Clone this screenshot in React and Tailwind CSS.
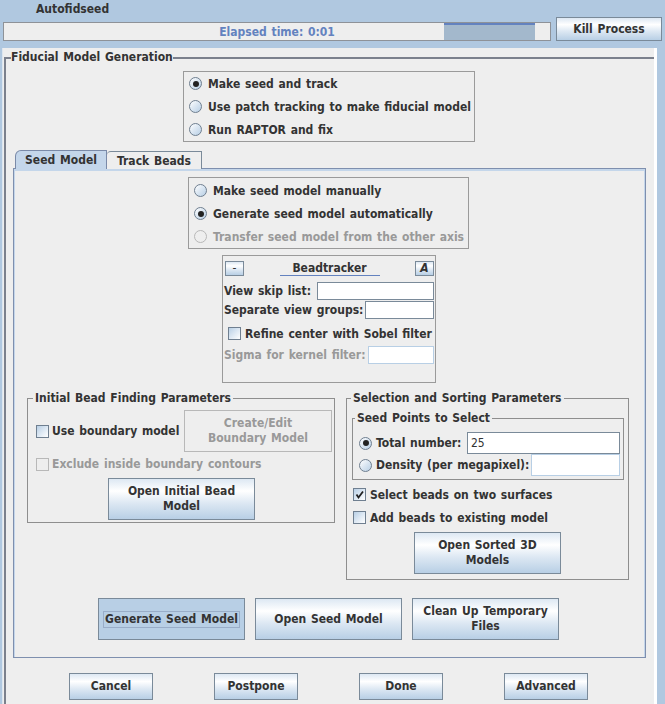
import React from "react";

const font = "font-['DejaVu_Sans_Condensed','DejaVu_Sans',sans-serif] font-bold";
const btnBg = "bg-[linear-gradient(to_bottom,#dde8f3_0%,#ffffff_30%,#dde8f3_60%,#b8cfe5_100%)]";

function Radio({ checked, disabled }) {
  if (disabled) {
    return <span className="flex w-[13px] h-[13px] shrink-0 rounded-full border border-[#b8b8b8]" />;
  }
  return (
    <span className="flex w-[13px] h-[13px] shrink-0 items-center justify-center rounded-full border border-[#6f7f90] bg-[linear-gradient(135deg,#ffffff_0%,#dde8f3_45%,#b8cfe5_100%)]">
      {checked && <span className="w-[6px] h-[6px] rounded-full bg-[#222222]" />}
    </span>
  );
}

function Check({ checked, disabled }) {
  if (disabled) {
    return <span className="flex w-[13px] h-[13px] shrink-0 border border-[#b8b8b8]" />;
  }
  return (
    <span className="flex w-[13px] h-[13px] shrink-0 items-center justify-center border border-[#6f7f90] bg-[linear-gradient(135deg,#b8cfe5_0%,#dde8f3_50%,#ffffff_100%)]">
      {checked && (
        <svg width="11" height="11" viewBox="0 0 11 11">
          <path d="M2.5 5.5 L4.5 8.5 L9 2.5" stroke="#222222" strokeWidth="1.8" fill="none" />
        </svg>
      )}
    </span>
  );
}

function Btn({ children, className = "" }) {
  return (
    <div className={"flex items-center justify-center text-center leading-[15px] border border-[#7a8a99] shrink-0 " + btnBg + " " + className}>
      {children}
    </div>
  );
}

function Field({ className = "", value, disabled }) {
  return (
    <div className={(disabled ? "border border-[#b8cfe5] " : "border border-[#7a8a99] ") + "bg-white shrink-0 flex items-center pl-[3px] font-normal text-[#333333] " + className}>
      {value}
    </div>
  );
}

function RadioRow({ checked, disabled, children }) {
  return (
    <div className="h-[23px] flex items-center pl-[5px]">
      <Radio checked={checked} disabled={disabled} />
      <span className={"ml-[6px] " + (disabled ? "text-[#999999]" : "")}>{children}</span>
    </div>
  );
}

export default function App() {
  return (
    <div className={"w-[665px] h-[704px] overflow-hidden flex flex-col bg-[#b0c8e0] text-[12px] text-[#333333] [word-spacing:1px] " + font}>
      <div className="h-[48px] shrink-0">
        <div className="h-[17px] pl-[36px] leading-[18px]">Autofidseed</div>
        <div className="flex items-end h-[24px] pl-[3px]">
          <div className="relative flex w-[548px] h-[19px] border border-[#8e9298] bg-[#eeeeee]">
            <div className="ml-[440px] w-[91px] h-full bg-[#a3b8cc] border-t-2 border-[#6382bf]" />
            <span className="absolute inset-0 flex items-center justify-center text-[#6382bf]">Elapsed time: 0:01</span>
          </div>
          <Btn className="ml-[5px] w-[106px] h-[24px]">Kill Process</Btn>
        </div>
      </div>

      <div className="flex-1 ml-[2px] w-[655px] bg-[#eeeeee] border-l border-l-[#dde6ef] border-r-[3px] border-r-white pt-[2px]">
        <fieldset className="ml-[1px] border-t-2 border-l-2 border-[#7b808c] min-w-0 h-[670px]">
          <legend className="ml-[5px] leading-[15px]">Fiducial Model Generation</legend>

          <div className="mt-[6px] ml-[177px] w-[292px] h-[71px] border border-[#9a9a9a]">
            <RadioRow checked>Make seed and track</RadioRow>
            <RadioRow>Use patch tracking to make fiducial model</RadioRow>
            <RadioRow>Run RAPTOR and fix</RadioRow>
          </div>

          <div className="mt-[8px] ml-[7px] w-[633px]">
            <div className="flex items-end h-[19px] pl-[2px] -mb-px relative z-10">
              <div className="w-[92px] h-[19px] flex items-center justify-center bg-[#c4d6ea] border border-b-0 border-[#7a8aa8] rounded-tl-[6px]">Seed Model</div>
              <div className="w-[95px] h-[18px] flex items-center justify-center bg-[#eeeeee] border border-b-0 border-l-0 border-[#7a8a99] rounded-tl-[4px]">Track Beads</div>
            </div>
            <div className="h-[490px] border border-[#7e8fae] shadow-[inset_0_1px_0_1px_#c4d6ea]">
              <div className="pt-[8px]">
                <div className="ml-[174px] w-[281px] h-[72px] pt-px border border-[#9a9a9a]">
                  <RadioRow>Make seed model manually</RadioRow>
                  <RadioRow checked>Generate seed model automatically</RadioRow>
                  <RadioRow disabled>Transfer seed model from the other axis</RadioRow>
                </div>

                <div className="mt-[6px] ml-[208px] w-[214px] h-[128px] border border-[#9a9a9a]">
                  <div className="mt-[5px] h-[15px] flex items-center">
                    <Btn className="ml-[2px] w-[19px] h-[15px] font-normal">-</Btn>
                    <div className="flex-1 flex justify-center">
                      <div className="w-[100px] h-[15px] border-b border-[#6382bf] text-center leading-[14px]">Beadtracker</div>
                    </div>
                    <Btn className="mr-[1px] w-[19px] h-[15px] italic">A</Btn>
                  </div>
                  <div className="mt-[6px] h-[18px] flex items-center pl-[1px] pr-[1px]">
                    <span>View skip list:</span>
                    <Field className="ml-auto w-[117px] h-[18px]" />
                  </div>
                  <div className="mt-px h-[18px] flex items-center pl-[1px] pr-[1px]">
                    <span>Separate view groups:</span>
                    <Field className="ml-auto w-[69px] h-[18px]" />
                  </div>
                  <div className="mt-[8px] h-[13px] flex items-center pl-[5px]">
                    <Check />
                    <span className="ml-[4px]">Refine center with Sobel filter</span>
                  </div>
                  <div className="mt-[6px] h-[18px] flex items-center pl-[1px] pr-[1px]">
                    <span className="text-[#999999]">Sigma for kernel filter:</span>
                    <Field disabled className="ml-auto w-[66px] h-[18px]" />
                  </div>
                </div>

                <div className="mt-[8px] ml-[13px] flex items-start gap-[11px]">
                  <fieldset className="w-[308px] border border-[#8e8e8e] pb-[2px] min-w-0">
                    <legend className="ml-[5px] px-[2px] leading-[15px]">Initial Bead Finding Parameters</legend>
                    <div className="mt-[4px] h-[42px] flex items-center">
                      <span className="ml-[8px]"><Check /></span>
                      <span className="ml-[3px]">Use boundary model</span>
                      <div className="ml-auto mr-[2px] w-[148px] h-[42px] flex items-center justify-center text-center leading-[15px] border border-[#b8b8b8] text-[#999999]">
                        Create/Edit<br />Boundary Model
                      </div>
                    </div>
                    <div className="mt-[4px] h-[16px] flex items-center">
                      <span className="ml-[8px]"><Check disabled /></span>
                      <span className="ml-[3px] text-[#999999]">Exclude inside boundary contours</span>
                    </div>
                    <Btn className="mt-[6px] ml-[80px] w-[147px] h-[42px]">Open Initial Bead<br />Model</Btn>
                  </fieldset>

                  <fieldset className="w-[283px] border border-[#8e8e8e] pb-[5px] min-w-0">
                    <legend className="ml-[4px] px-[2px] leading-[15px]">Selection and Sorting Parameters</legend>
                    <fieldset className="mt-[5px] ml-[5px] w-[272px] border border-[#8e8e8e] pb-[3px] min-w-0">
                      <legend className="ml-[2px] px-[2px] leading-[15px]">Seed Points to Select</legend>
                      <div className="mt-[6px] h-[22px] flex items-center">
                        <span className="ml-[6px]"><Radio checked /></span>
                        <span className="ml-[4px]">Total number:</span>
                        <Field className="ml-auto mr-[3px] w-[153px] h-[22px]" value="25" />
                      </div>
                      <div className="h-[22px] flex items-center">
                        <span className="ml-[6px]"><Radio /></span>
                        <span className="ml-[4px]">Density (per megapixel):</span>
                        <Field disabled className="ml-auto mr-[3px] w-[89px] h-[22px]" />
                      </div>
                    </fieldset>
                    <div className="mt-[7px] h-[15px] flex items-center">
                      <span className="ml-[6px]"><Check checked /></span>
                      <span className="ml-[4px]">Select beads on two surfaces</span>
                    </div>
                    <div className="mt-[8px] h-[15px] flex items-center">
                      <span className="ml-[6px]"><Check /></span>
                      <span className="ml-[4px]">Add beads to existing model</span>
                    </div>
                    <Btn className="mt-[7px] ml-[67px] w-[147px] h-[42px]">Open Sorted 3D<br />Models</Btn>
                  </fieldset>
                </div>

                <div className="mt-[18px] ml-[84px] flex gap-[10px]">
                  <div className="w-[147px] h-[42px] flex items-center justify-center border border-[#7a8a99] bg-[#b8cfe5]">
                    <span className="px-px border border-[#99adc8] leading-[15px]">Generate Seed Model</span>
                  </div>
                  <Btn className="w-[147px] h-[42px]">Open Seed Model</Btn>
                  <Btn className="w-[147px] h-[42px]">Clean Up Temporary<br />Files</Btn>
                </div>
              </div>
            </div>
          </div>

          <div className="mt-[15px] ml-[63px] flex gap-[61px]">
            <Btn className="w-[84px] h-[27px]">Cancel</Btn>
            <Btn className="w-[84px] h-[27px]">Postpone</Btn>
            <Btn className="w-[84px] h-[27px]">Done</Btn>
            <Btn className="w-[84px] h-[27px]">Advanced</Btn>
          </div>
        </fieldset>
      </div>
    </div>
  );
}
